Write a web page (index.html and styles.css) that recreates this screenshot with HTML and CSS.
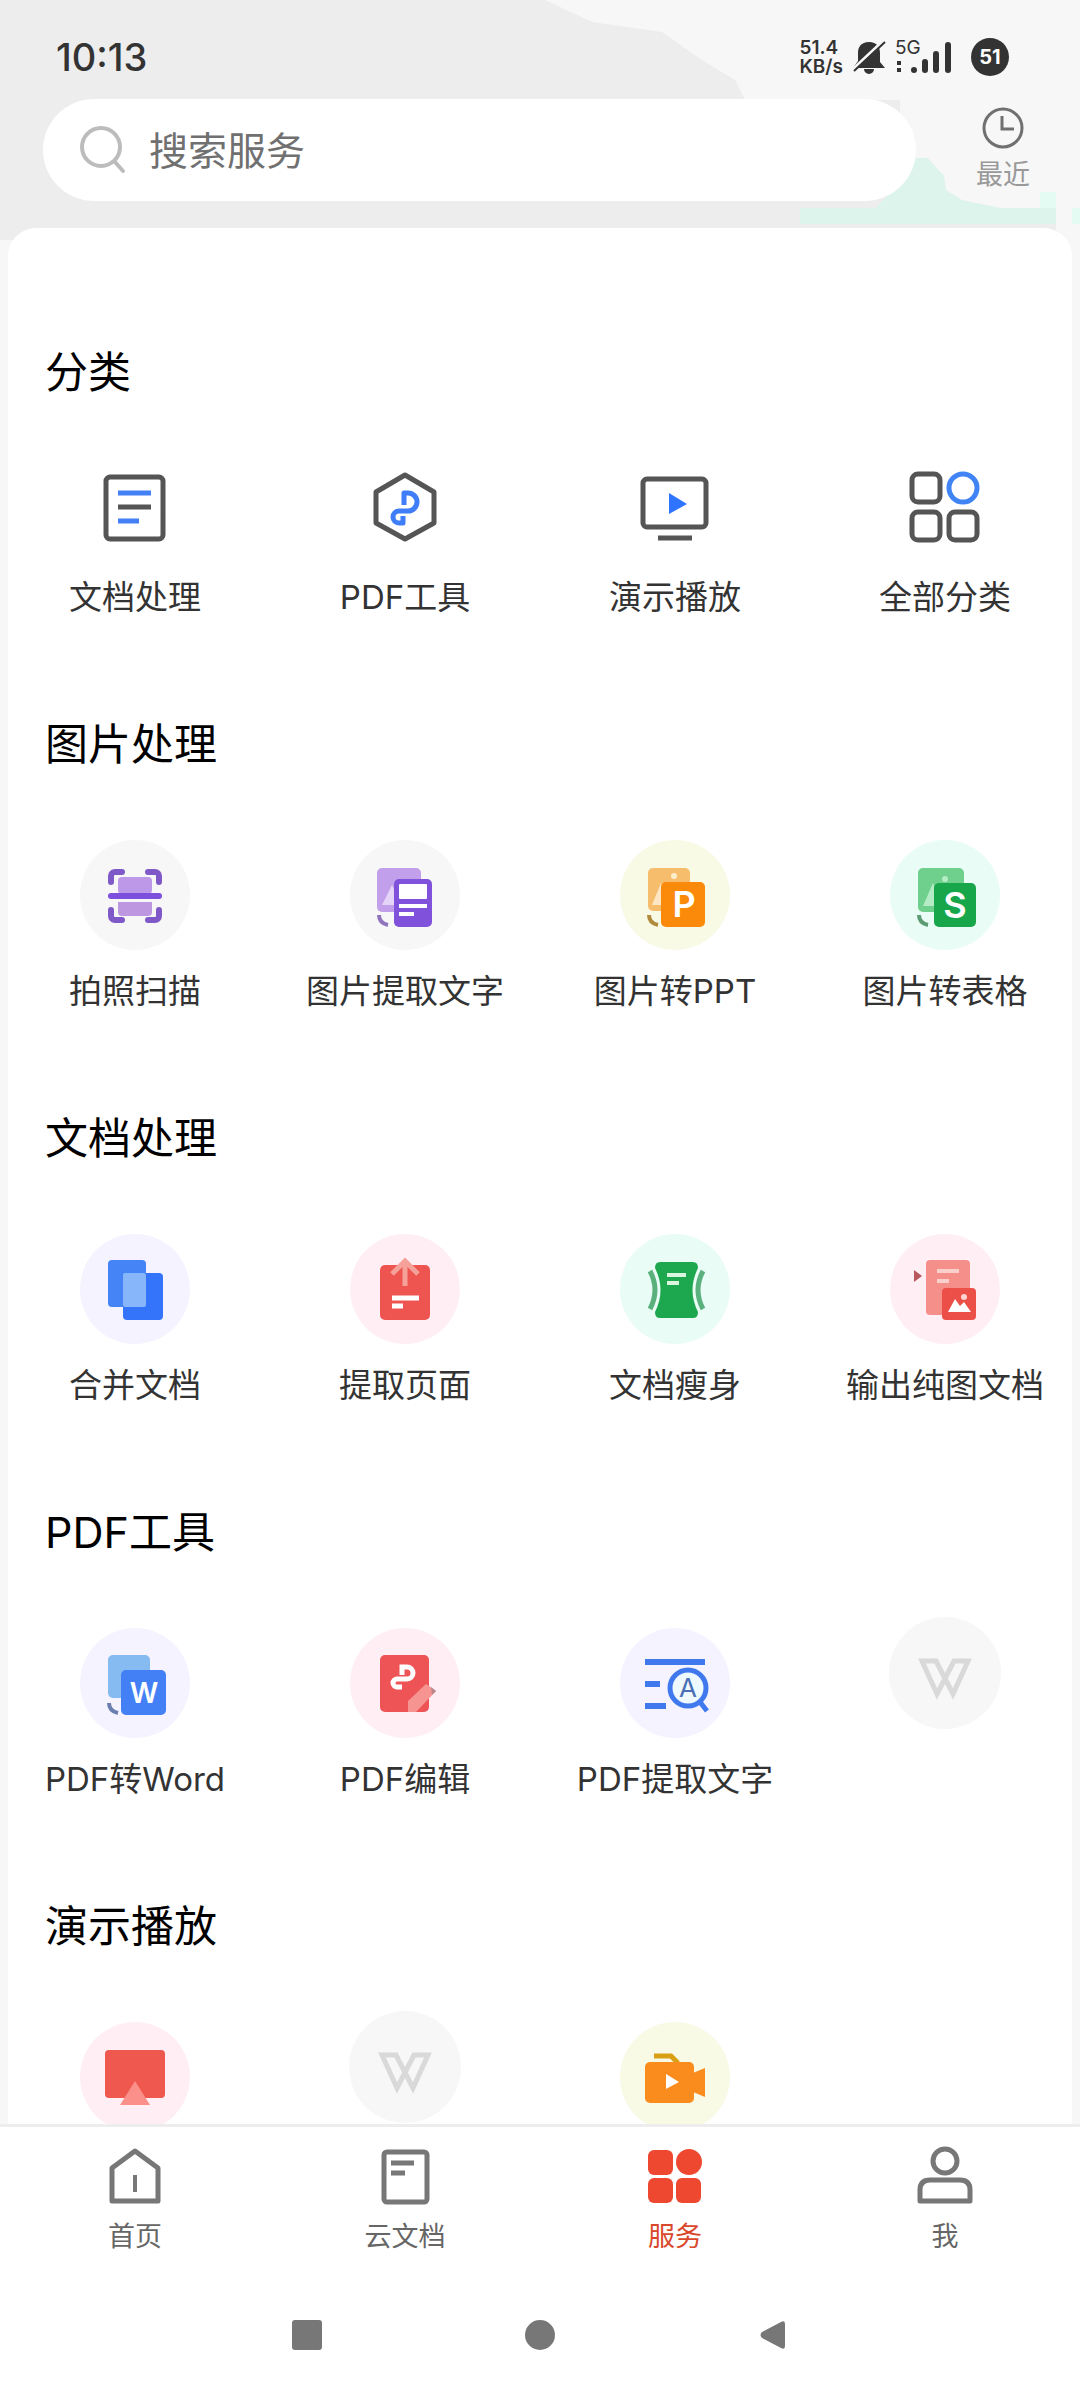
FILE: index.html
```html
<!DOCTYPE html>
<html lang="zh-CN">

<head>
    <meta charset="UTF-8">
    <meta name="viewport" content="width=device-width, initial-scale=1">
    <title>服务</title>
    <link rel="stylesheet" href="styles.css">
</head>

<body>

    <header class="header">
        <svg class="header-bg" viewBox="0 0 1080 240" preserveAspectRatio="none" aria-hidden="true">
            <path fill="#f7f7f7" d="M545 0L592 22L662 32L702 60L735 80L745 100H900V200H920V208H1056V240H1080V0Z" />
            <path fill="#dcf4ec" d="M912 158H928L944 176L946 190L962 200L1000 208H1056V224H800V208H876L906 176Z" />
            <path fill="#e4fbf4" d="M1040 192H1056V208H1040ZM1072 208H1080V224H1072Z" />
        </svg>

        <div class="status">
            <span class="time">10:13</span>
            <div class="status-right">
                <span class="speed">51.4<br>KB/s</span>
                <svg class="bell" width="36" height="34" viewBox="0 0 36 34" aria-hidden="true">
                    <path fill="#333" d="M18 2C10 2 7 7 7 13V21L2 28H34L29 22V13C29 7 26 2 18 2ZM13 29a5 5 0 0 0 10 0Z" />
                    <path stroke="#f7f7f7" stroke-width="3" d="M1 30L32 1" />
                    <path stroke="#333" stroke-width="2" d="M3 31L34 2" />
                </svg>
                <svg class="signal" width="60" height="48" viewBox="0 0 60 48" aria-hidden="true">
                    <text x="0" y="21" font-size="19" fill="#333">5G</text>
                    <g fill="#333">
                        <rect x="2" y="28" width="4" height="4" />
                        <rect x="2" y="35" width="4" height="4" />
                        <circle cx="19" cy="37" r="3" />
                        <rect x="27" y="26" width="6" height="14" rx="3" />
                        <rect x="38" y="18" width="6" height="22" rx="3" />
                        <rect x="50" y="9" width="6" height="31" rx="3" />
                    </g>
                </svg>
                <span class="battery">51</span>
            </div>
        </div>

        <div class="topbar">
            <label class="search">
                <svg width="48" height="50" viewBox="0 0 48 50" fill="none" stroke="#bcbcbc" stroke-width="4" stroke-linecap="round" aria-hidden="true">
                    <circle cx="22" cy="22" r="19" />
                    <path d="M36 37L44 46" />
                </svg>
                <input type="search" placeholder="搜索服务" aria-label="搜索服务">
            </label>
            <button class="recent" type="button">
                <svg width="42" height="42" viewBox="0 0 42 42" fill="none" stroke="#707070" stroke-width="3" aria-hidden="true">
                    <circle cx="21" cy="21" r="19" />
                    <path d="M20 9V22H32" />
                </svg>
                <span>最近</span>
            </button>
        </div>
    </header>

    <main class="card">

        <section class="group">
            <h2>分类</h2>
            <div class="grid category">
                <a href="#">
                    <svg width="100" height="100" viewBox="0 0 100 100" fill="none" stroke="#555" stroke-width="5">
                        <rect x="21" y="20" width="57" height="62" rx="4" />
                        <path stroke="#4480f5" d="M33 36H66M33 64H54" />
                        <path d="M33 50H66" />
                    </svg>
                    <span>文档处理</span>
                </a>
                <a href="#">
                    <svg width="100" height="100" viewBox="0 0 100 100" fill="none" stroke="#555" stroke-width="5" stroke-linejoin="round">
                        <path d="M50 18L79 35V66L50 82L21 66V35Z" />
                        <path stroke="#3f7ef8" d="M49 48V36H53a9 9 0 0 1 0 18H44a6 6 0 0 0 0 12H48V59" />
                    </svg>
                    <span>PDF工具</span>
                </a>
                <a href="#">
                    <svg width="100" height="100" viewBox="0 0 100 100" fill="none" stroke="#555" stroke-width="5">
                        <rect x="18" y="22" width="63" height="48" rx="4" />
                        <path d="M33 81H67" />
                        <path fill="#2f74ff" stroke="none" d="M44 36L62 47L44 57Z" />
                    </svg>
                    <span>演示播放</span>
                </a>
                <a href="#">
                    <svg width="100" height="100" viewBox="0 0 100 100" fill="none" stroke="#555" stroke-width="5">
                        <rect x="17" y="17" width="28" height="28" rx="6" />
                        <circle cx="68" cy="31" r="14" stroke="#4084f5" />
                        <rect x="17" y="55" width="28" height="28" rx="6" />
                        <rect x="54" y="55" width="28" height="28" rx="6" />
                    </svg>
                    <span>全部分类</span>
                </a>
            </div>
        </section>

        <section class="group">
            <h2>图片处理</h2>
            <div class="grid">
                <a href="#">
                    <svg width="132" height="132" viewBox="0 0 132 132">
                        <circle cx="66" cy="66" r="55" fill="#f7f7f8" />
                        <rect x="49" y="48" width="34" height="17" rx="4" fill="#bd98e8" />
                        <path fill="#bd98e0" d="M49 73H83V83a4 4 0 0 1-4 4H53a4 4 0 0 1-4-4Z" />
                        <path fill="none" stroke="#8059c8" stroke-width="6" stroke-linecap="round" d="M42 53V47a4 4 0 0 1 4-4H53M79 43H86a4 4 0 0 1 4 4V53M42 81V87a4 4 0 0 0 4 4H53M79 91H86a4 4 0 0 0 4-4V81" />
                        <path stroke="#7c50dc" stroke-width="6" stroke-linecap="round" d="M42 67H90" />
                    </svg>
                    <span>拍照扫描</span>
                </a>
                <a href="#">
                    <svg width="132" height="132" viewBox="0 0 132 132">
                        <circle cx="66" cy="66" r="55" fill="#f7f7f8" />
                        <rect x="38" y="39" width="44" height="44" rx="5" fill="#c29fea" />
                        <path fill="#e6d3f8" d="M43 76L53 56L62 76Z" />
                        <rect x="55" y="50" width="38" height="48" rx="5" fill="#8052dc" />
                        <rect x="60" y="55" width="28" height="15" rx="1" fill="#fff" />
                        <path fill="none" stroke="#fff" stroke-width="4" d="M60 77H88M60 85H75" />
                        <path fill="none" stroke="#8f74bd" stroke-width="4" d="M40 86Q40 94 49 96" />
                    </svg>
                    <span>图片提取文字</span>
                </a>
                <a href="#">
                    <svg width="132" height="132" viewBox="0 0 132 132">
                        <circle cx="66" cy="66" r="55" fill="#f8fae6" />
                        <rect x="39" y="39" width="42" height="43" rx="5" fill="#f5bd6c" />
                        <path fill="#fde6c4" d="M43 76L52 54L60 76Z" />
                        <circle cx="65" cy="47" r="3" fill="#fdeecb" />
                        <rect x="52" y="53" width="44" height="45" rx="5" fill="#fb8a0a" />
                        <text class="mark" x="75" y="88" font-size="36">P</text>
                        <path fill="none" stroke="#b08a3c" stroke-width="4" d="M40 86Q40 94 49 96" />
                    </svg>
                    <span>图片转PPT</span>
                </a>
                <a href="#">
                    <svg width="132" height="132" viewBox="0 0 132 132">
                        <circle cx="66" cy="66" r="55" fill="#e9fcf5" />
                        <rect x="39" y="39" width="46" height="44" rx="5" fill="#6fcf8c" />
                        <path fill="#b5ecc5" d="M44 77L54 54L62 77Z" />
                        <circle cx="66" cy="50" r="3" fill="#b5ecc5" />
                        <rect x="55" y="54" width="42" height="44" rx="5" fill="#18a64b" />
                        <text class="mark" x="76" y="89" font-size="36">S</text>
                        <path fill="none" stroke="#5c9a73" stroke-width="4" d="M40 86Q40 94 49 96" />
                    </svg>
                    <span>图片转表格</span>
                </a>
            </div>
        </section>

        <section class="group">
            <h2>文档处理</h2>
            <div class="grid">
                <a href="#">
                    <svg width="132" height="132" viewBox="0 0 132 132">
                        <circle cx="66" cy="66" r="55" fill="#f5f3ff" />
                        <rect x="39" y="37" width="38" height="47" rx="4" fill="#4484f6" />
                        <rect x="54" y="50" width="40" height="47" rx="4" fill="#3374fb" />
                        <rect x="54" y="50" width="23" height="34" rx="2" fill="#88b6fb" />
                    </svg>
                    <span>合并文档</span>
                </a>
                <a href="#">
                    <svg width="132" height="132" viewBox="0 0 132 132">
                        <circle cx="66" cy="66" r="55" fill="#ffeff5" />
                        <rect x="41" y="42" width="50" height="55" rx="5" fill="#ee5450" />
                        <path fill="none" stroke="#f5a19a" stroke-width="5" d="M66 63V38M53 51L66 38L79 51" />
                        <path stroke="#fff" stroke-width="5" d="M53 75H80M53 83H64" />
                    </svg>
                    <span>提取页面</span>
                </a>
                <a href="#">
                    <svg width="132" height="132" viewBox="0 0 132 132">
                        <circle cx="66" cy="66" r="55" fill="#e9fcf5" />
                        <path fill="#1da84f" d="M51 39H84Q89 39 89 45Q78 67 89 89Q89 95 84 95H51Q46 95 46 89Q57 67 46 45Q46 39 51 39Z" />
                        <path fill="none" stroke="#5bb17e" stroke-width="5" d="M41 48Q51 67 41 86M94 48Q84 67 94 86" />
                        <path stroke="#d8f6e0" stroke-width="4" d="M58 52H77M58 60H70" />
                    </svg>
                    <span>文档瘦身</span>
                </a>
                <a href="#">
                    <svg width="132" height="132" viewBox="0 0 132 132">
                        <circle cx="66" cy="66" r="55" fill="#ffeff5" />
                        <rect x="47" y="37" width="44" height="55" rx="4" fill="#f58f8a" />
                        <path stroke="#fbcfca" stroke-width="4" d="M58 48H80M58 58H70" />
                        <path fill="#b8585c" d="M35 47L43 53L35 59Z" />
                        <rect x="63" y="65" width="34" height="32" rx="4" fill="#ec4f48" />
                        <path fill="#fff" d="M69 89L76 76L81 83L85 79L92 89Z" />
                        <circle cx="85" cy="74" r="3" fill="#fbd3cf" />
                    </svg>
                    <span>输出纯图文档</span>
                </a>
            </div>
        </section>

        <section class="group">
            <h2>PDF工具</h2>
            <div class="grid">
                <a href="#">
                    <svg width="132" height="132" viewBox="0 0 132 132">
                        <circle cx="66" cy="66" r="55" fill="#f5f3ff" />
                        <rect x="39" y="38" width="42" height="43" rx="5" fill="#85bbf0" />
                        <rect x="52" y="53" width="45" height="45" rx="5" fill="#4380f6" />
                        <text class="mark" x="75" y="86" font-size="28">W</text>
                        <path fill="none" stroke="#6a7fae" stroke-width="4" d="M40 86Q40 94 49 96" />
                    </svg>
                    <span>PDF转Word</span>
                </a>
                <a href="#">
                    <svg width="132" height="132" viewBox="0 0 132 132">
                        <circle cx="66" cy="66" r="55" fill="#ffeff5" />
                        <rect x="41" y="38" width="49" height="57" rx="5" fill="#ee5456" />
                        <path fill="none" stroke="#fff" stroke-width="5" d="M63 58V50H68a6 6 0 0 1 0 12H58a4 4 0 0 0 0 8H63" />
                        <path fill="#f69492" d="M69 95V84L87 67L97 74L77 95Z" />
                        <path fill="#b9868c" d="M92 70L97 74L93 78Z" />
                    </svg>
                    <span>PDF编辑</span>
                </a>
                <a href="#">
                    <svg width="132" height="132" viewBox="0 0 132 132">
                        <circle cx="66" cy="66" r="55" fill="#f5f3ff" />
                        <g fill="none" stroke="#4079ee" stroke-width="6">
                            <path d="M36 45H96M36 67H51M36 89H57" />
                            <circle cx="79" cy="71" r="18" fill="#eefaff" stroke-width="5" />
                            <path d="M91 85L98 94" stroke-width="5" />
                        </g>
                        <text x="79" y="80" font-size="26" text-anchor="middle" fill="#4a6fb5">A</text>
                    </svg>
                    <span>PDF提取文字</span>
                </a>
                <a href="#" aria-label="加载中">
                    <svg width="112" height="112" viewBox="0 0 112 112">
                        <circle cx="56" cy="56" r="56" fill="#f7f7f7" />
                        <path fill="none" stroke="#d9d9d9" stroke-width="5" d="M33 44H47L64 77L79 44H65L48 77Z" />
                    </svg>
                </a>
            </div>
        </section>

        <section class="group">
            <h2>演示播放</h2>
            <div class="grid">
                <a href="#" aria-label="投影">
                    <svg width="132" height="132" viewBox="0 0 132 132">
                        <circle cx="66" cy="66" r="55" fill="#ffeff5" />
                        <rect x="36" y="39" width="60" height="48" rx="4" fill="#ef584f" />
                        <path fill="#fb8f8a" d="M66 70L81 94H51Z" />
                    </svg>
                </a>
                <a href="#" aria-label="加载中">
                    <svg width="112" height="112" viewBox="0 0 112 112">
                        <circle cx="56" cy="56" r="56" fill="#f7f7f7" />
                        <path fill="none" stroke="#d9d9d9" stroke-width="5" d="M33 44H47L64 77L79 44H65L48 77Z" />
                    </svg>
                </a>
                <a href="#" aria-label="录制">
                    <svg width="132" height="132" viewBox="0 0 132 132">
                        <circle cx="66" cy="66" r="55" fill="#f8fae6" />
                        <path fill="none" stroke="#d9a015" stroke-width="5" d="M45 45H62L69 52" />
                        <rect x="36" y="51" width="49" height="41" rx="5" fill="#f98c1c" />
                        <path fill="#f98c1c" d="M84 62L96 57V86L84 81Z" />
                        <path fill="#fff" d="M57 63L70 71L57 78Z" />
                    </svg>
                </a>
            </div>
        </section>

    </main>

    <footer>
        <nav class="tabs">
            <a href="#">
                <svg width="64" height="64" viewBox="0 0 64 64" fill="none" stroke="#777" stroke-width="5" stroke-linejoin="round">
                    <path d="M32 8L55 25V58H9V25Z" />
                    <path stroke-width="4" d="M32 32V49" />
                </svg>
                <span>首页</span>
            </a>
            <a href="#">
                <svg width="64" height="64" viewBox="0 0 64 64" fill="none" stroke="#777" stroke-width="5">
                    <rect x="11" y="9" width="43" height="50" rx="3" />
                    <path d="M18 20H41M18 30H32" />
                </svg>
                <span>云文档</span>
            </a>
            <a href="#" class="active">
                <svg width="64" height="64" viewBox="0 0 64 64" fill="#ee4830">
                    <rect x="5" y="7" width="25" height="25" rx="6" />
                    <circle cx="46" cy="19" r="13" />
                    <rect x="5" y="35" width="25" height="25" rx="6" />
                    <rect x="33" y="35" width="25" height="25" rx="6" />
                </svg>
                <span>服务</span>
            </a>
            <a href="#">
                <svg width="64" height="64" viewBox="0 0 64 64" fill="none" stroke="#777" stroke-width="5">
                    <circle cx="32" cy="18" r="12" />
                    <path stroke-linejoin="round" d="M7 58V47Q7 37 17 37H47Q57 37 57 47V58Z" />
                </svg>
                <span>我</span>
            </a>
        </nav>

        <div class="sysnav">
            <button type="button" aria-label="最近任务">
                <svg width="30" height="30" viewBox="0 0 30 30" fill="#777"><rect width="30" height="30" rx="3" /></svg>
            </button>
            <button type="button" aria-label="主屏幕">
                <svg width="30" height="30" viewBox="0 0 30 30" fill="#777"><circle cx="15" cy="15" r="15" /></svg>
            </button>
            <button type="button" aria-label="返回">
                <svg width="30" height="30" viewBox="0 0 30 30" fill="#777"><path d="M4 12L23 2Q27 0 27 4V26Q27 30 23 28L4 18Q1 15 4 12Z" /></svg>
            </button>
        </div>
    </footer>

</body>

</html>
```
FILE: styles.css
```css
* {
    box-sizing: border-box;
}

body {
    margin: 0;
    height: 100vh;
    display: flex;
    flex-direction: column;
    background-color: #f7f7f7;
    color: #333;
    font-family: Inter, "Noto Sans CJK SC", sans-serif;
}

a {
    color: inherit;
    text-decoration: none;
}

button {
    padding: 0;
    border: none;
    background: none;
    font-family: inherit;
    color: inherit;
}

svg {
    display: block;
    flex-shrink: 0;
}

/* header */
.header {
    position: relative;
    background-color: #ededed;
    /* continues behind the card's rounded corners */
    margin-bottom: -12px;
    padding-bottom: 39px;
}

.header-bg {
    position: absolute;
    top: 0;
    left: 0;
    width: 100%;
    height: 100%;
}

.status,
.topbar {
    position: relative;
    display: flex;
    align-items: center;
}

.status {
    height: 99px;
    padding: 14px 71px 0 56px;
    justify-content: space-between;
}

.time {
    font-size: 38px;
    font-weight: 500;
}

.status-right {
    display: flex;
    align-items: center;
    gap: 8px;
}

.speed {
    font-size: 19px;
    line-height: 19px;
    font-weight: 600;
}

.battery {
    width: 38px;
    height: 38px;
    margin-left: 8px;
    border-radius: 50%;
    background-color: #333;
    color: #fff;
    font-size: 20px;
    line-height: 38px;
    font-weight: 700;
    text-align: center;
}

.topbar {
    padding: 0 50px 0 43px;
    gap: 60px;
}

.search {
    flex: 1;
    min-width: 0;
    height: 102px;
    display: flex;
    align-items: center;
    gap: 22px;
    padding: 0 36px;
    border-radius: 51px;
    background-color: #fff;
}

.search input {
    flex: 1;
    min-width: 0;
    padding: 0;
    border: none;
    outline: none;
    background: none;
    font-family: inherit;
    font-size: 39px;
    color: #333;
}

.search input::placeholder {
    color: #707070;
    opacity: 1;
}

.recent {
    display: flex;
    flex-direction: column;
    align-items: center;
    gap: 8px;
    font-size: 27px;
    line-height: 36px;
    color: #999;
}

/* service groups */
.card {
    position: relative;
    flex: 1;
    min-height: 0;
    margin: 0 8px;
    padding-top: 114px;
    border-radius: 28px 28px 0 0;
    background-color: #fff;
    overflow: hidden;
}

.group {
    margin-bottom: 95px;
}

.group h2 {
    margin: 0 0 55px 37px;
    font-size: 43px;
    line-height: 60px;
    font-weight: 400;
    color: #000;
}

.grid {
    display: grid;
    grid-template-columns: repeat(4, 1fr);
    margin: 0 -8px;
}

.grid a {
    display: flex;
    flex-direction: column;
    align-items: center;
    gap: 8px;
    font-size: 33px;
    line-height: 44px;
    white-space: nowrap;
}

.category a {
    gap: 18px;
}

.mark {
    fill: #fff;
    font-weight: 600;
    text-anchor: middle;
}

/* bottom bars */
footer {
    position: relative;
    background-color: #fff;
    border-top: 3px solid #ededed;
}

.tabs {
    display: grid;
    grid-template-columns: repeat(4, 1fr);
    padding: 16px 0 15px;
}

.tabs a {
    display: flex;
    flex-direction: column;
    align-items: center;
    gap: 12px;
    font-size: 27px;
    line-height: 36px;
    color: #666;
}

.tabs .active {
    color: #d9482b;
}

.sysnav {
    height: 130px;
    display: flex;
    justify-content: center;
    align-items: center;
    gap: 203px;
}
```
